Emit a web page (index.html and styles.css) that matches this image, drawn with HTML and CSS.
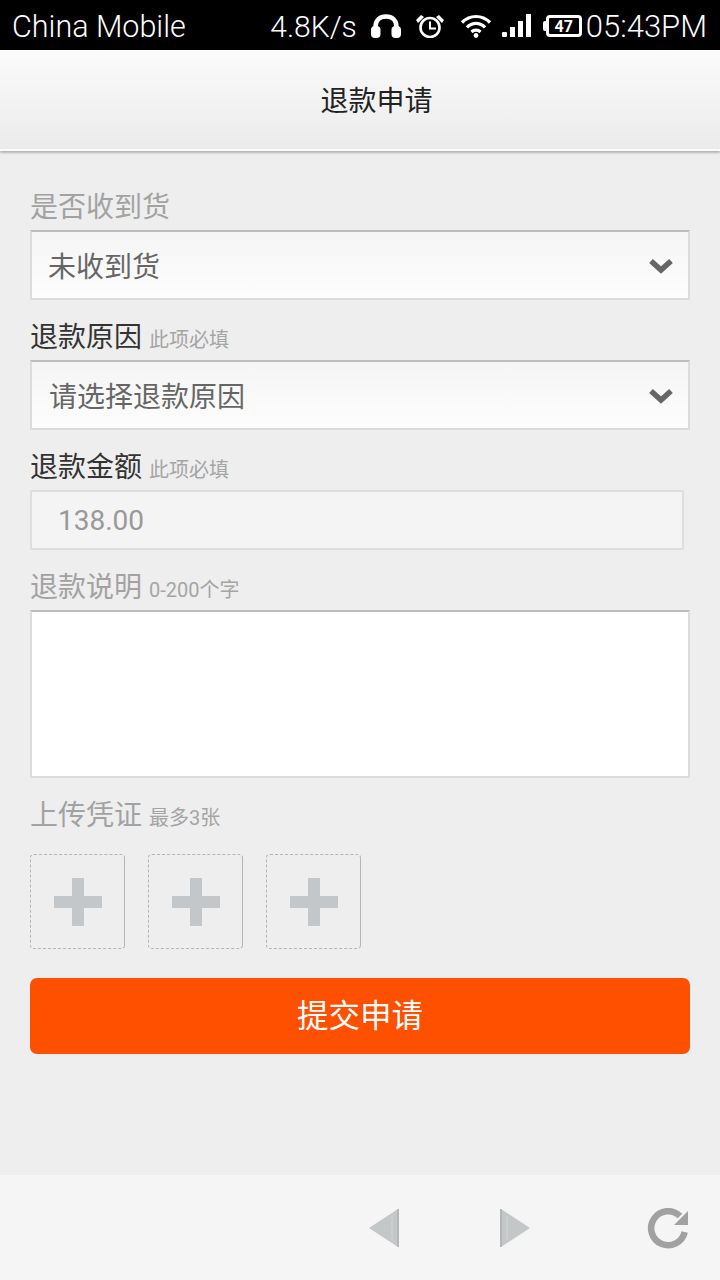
FILE: index.html
```html
<!DOCTYPE html>
<html lang="zh-CN">
<head>
  <meta charset="UTF-8">
  <title>退款申请</title>
  <link rel="stylesheet" href="styles.css">
</head>
<body>
  <!-- status bar -->
  <div class="status">
    <span class="carrier">China Mobile</span>
    <div class="status-right">
      <span class="speed">4.8K/s</span>
      <svg class="ic-head" width="32" height="24" viewBox="0 0 32 24">
        <path d="M5.500 18V13C5.500 6 10 2.500 16 2.500S26.500 6 26.500 13V18" fill="none" stroke="#fff" stroke-width="4.500"/>
        <rect x="1" y="12" width="9.500" height="12" rx="4" fill="#fff"/>
        <rect x="21.500" y="12" width="9.500" height="12" rx="4" fill="#fff"/>
      </svg>
      <svg class="ic-alarm" width="30" height="24" viewBox="0 0 30 24">
        <circle cx="15" cy="13.500" r="9.500" fill="none" stroke="#fff" stroke-width="2.600"/>
        <path d="M15 7.500V14.500H21" fill="none" stroke="#fff" stroke-width="2"/>
        <path d="M1 6L6 1L9 3L3 9ZM29 6L24 1L21 3L27 9Z" fill="#fff"/>
      </svg>
      <svg class="ic-wifi" width="32" height="24" viewBox="0 0 32 24">
        <path d="M2 8.500C10 .5 22 .5 30 8.500M7 13.500C12 8 20 8 25 13.500M11.500 18C14 15.500 18 15.500 20.500 18" fill="none" stroke="#fff" stroke-width="3.200"/>
        <circle cx="16" cy="21.500" r="2.400" fill="#fff"/>
      </svg>
      <svg class="ic-signal" width="30" height="24" viewBox="0 0 30 24">
        <rect x="1" y="18" width="5" height="5" rx="1" fill="#fff"/>
        <rect x="9" y="13" width="5" height="10" fill="#fff"/>
        <rect x="17" y="7" width="5" height="16" fill="#fff"/>
        <rect x="25" y="0" width="5" height="23" fill="#fff"/>
      </svg>
      <div class="battery"><span>47</span></div>
      <span class="clock">05:43PM</span>
    </div>
  </div>

  <div class="header">退款申请</div>

  <form class="form">
    <div class="label muted">是否收到货</div>
    <div class="select">
      <span>未收到货</span>
      <svg class="arrow" width="26" height="18" viewBox="0 0 26 18"><path d="M3 4L13 13L23 4" fill="none" stroke="#666" stroke-width="5.500"/></svg>
    </div>

    <div class="label">退款原因 <small>此项必填</small></div>
    <div class="select">
      <span class="pad">请选择退款原因</span>
      <svg class="arrow" width="26" height="18" viewBox="0 0 26 18"><path d="M3 4L13 13L23 4" fill="none" stroke="#666" stroke-width="5.500"/></svg>
    </div>

    <div class="label">退款金额 <small>此项必填</small></div>
    <input class="amount" type="text" value="138.00" readonly>

    <div class="label muted">退款说明 <small>0-200个字</small></div>
    <textarea class="desc"></textarea>

    <div class="label muted">上传凭证 <small>最多3张</small></div>
    <div class="uploads">
      <div class="upload"><div class="plus"></div></div>
      <div class="upload"><div class="plus"></div></div>
      <div class="upload"><div class="plus"></div></div>
    </div>

    <button class="submit" type="button">提交申请</button>
  </form>

  <!-- browser toolbar -->
  <div class="toolbar">
    <svg class="back" width="32" height="42" viewBox="0 0 32 42">
      <path d="M1 21L30 2V40Z" fill="#c4c7c7"/>
      <path d="M30 2V40" stroke="#b4b7b7" stroke-width="2"/>
      <path d="M24 9V33" stroke="#d2d4d4" stroke-width="1"/>
    </svg>
    <svg class="forward" width="32" height="42" viewBox="0 0 32 42">
      <path d="M31 21L2 2V40Z" fill="#c4c7c7"/>
      <path d="M2 2V40" stroke="#b4b7b7" stroke-width="2"/>
      <path d="M8 9V33" stroke="#d2d4d4" stroke-width="1"/>
    </svg>
    <svg width="42" height="42" viewBox="0 0 42 42">
      <path d="M33 9A17 17 0 1 0 37.700 25" fill="none" stroke="#a1a1a1" stroke-width="6.500"/>
      <path d="M41 4V18H27Z" fill="#a1a1a1"/>
    </svg>
  </div>
</body>
</html>
```

FILE: styles.css
```css
* {
  box-sizing: border-box;
}

html, body {
  margin: 0;
  padding: 0;
}

body {
  width: 720px;
  height: 1280px;
  display: flex;
  flex-direction: column;
  background-color: #eeeeee;
  font-family: Roboto, "Noto Sans CJK SC", sans-serif;
}

.status {
  height: 50px;
  background-color: #000;
  color: #fff;
  display: flex;
  justify-content: space-between;
  align-items: center;
  padding: 2px 13px 0 12px;
  font-size: 30.500px;
  font-weight: 300;
}

.status-right {
  display: flex;
  align-items: center;
}

.speed { margin-right: 13px; font-size: 30px; }
.clock { font-size: 31px; }
.ic-head { margin-right: 13px; }
.ic-alarm { margin-right: 15px; }
.ic-wifi { margin-right: 9px; }
.ic-signal { margin-right: 15px; }

.battery {
  position: relative;
  width: 36px;
  height: 22px;
  border: 3px solid #fff;
  border-radius: 4px;
  margin-right: 4px;
  display: flex;
  align-items: center;
  justify-content: center;
  font-size: 16px;
  font-weight: 700;
}

/* battery nub */
.battery::before {
  content: "";
  position: absolute;
  left: -6px;
  top: 3px;
  width: 3px;
  height: 10px;
  background-color: #fff;
  border-radius: 2px 0 0 2px;
}

.header {
  height: 101px;
  display: flex;
  align-items: center;
  justify-content: center;
  padding: 0 0 2px 33px;
  font-size: 28px;
  color: #222;
  background: linear-gradient(#fbfbfb, #ebebeb);
  border-bottom: 2px solid #fafafa;
  box-shadow: 0 2px 2px #b5b5b5;
}

.form {
  flex: 1;
  display: flex;
  flex-direction: column;
  padding: 35px 30px 0;
}

.label {
  height: 44px;
  line-height: 44px;
  font-size: 28px;
  color: #333;
  margin-top: 16px;
}

.label:first-child { margin-top: 0; }

.label.muted { color: #a2a2a2; }

.label small {
  font-size: 20px;
  color: #a5a5a5;
}

.select {
  height: 70px;
  display: flex;
  align-items: center;
  justify-content: space-between;
  padding: 0 14px 0 16px;
  font-size: 28px;
  color: #666;
  border: 2px solid #dcdcdc;
  border-top-color: #bdbdbd;
  background: linear-gradient(#f5f5f5, #fdfdfd);
}

.select .pad { padding-left: 1px; }

.arrow { margin-top: 2px; }

.amount {
  width: 654px;
  height: 60px;
  padding: 0 0 0 26px;
  font-family: inherit;
  font-size: 28px;
  color: #999;
  background-color: #f4f4f4;
  border: 2px solid #dedede;
  border-radius: 0;
  outline: none;
}

.desc {
  display: block;
  height: 168px;
  resize: none;
  background-color: #fff;
  border: 2px solid #dcdcdc;
  border-top-color: #bdbdbd;
  border-radius: 0;
  outline: none;
}

.uploads {
  display: flex;
  gap: 23px;
  margin-top: 16px;
}

.upload {
  width: 95px;
  height: 95px;
  display: flex;
  align-items: center;
  justify-content: center;
  border: 1px dashed #b5b5b5;
  border-right-style: solid;
  border-radius: 4px;
}

.plus {
  width: 48px;
  height: 48px;
  background:
    linear-gradient(#c4c7c9, #c4c7c9) center / 48px 12px no-repeat,
    linear-gradient(#c4c7c9, #c4c7c9) center / 12px 48px no-repeat;
}

.submit {
  height: 76px;
  margin-top: 29px;
  padding: 0 0 6px;
  border: none;
  border-radius: 7px;
  background-color: #ff5000;
  color: #fff;
  font-family: inherit;
  font-size: 31.500px;
}

.toolbar {
  height: 105px;
  background-color: #f5f5f5;
  display: flex;
  align-items: center;
  justify-content: flex-end;
  padding: 0 31px 0 0;
}

.back { margin-right: 99px; }
.forward { margin-right: 116px; }
```
